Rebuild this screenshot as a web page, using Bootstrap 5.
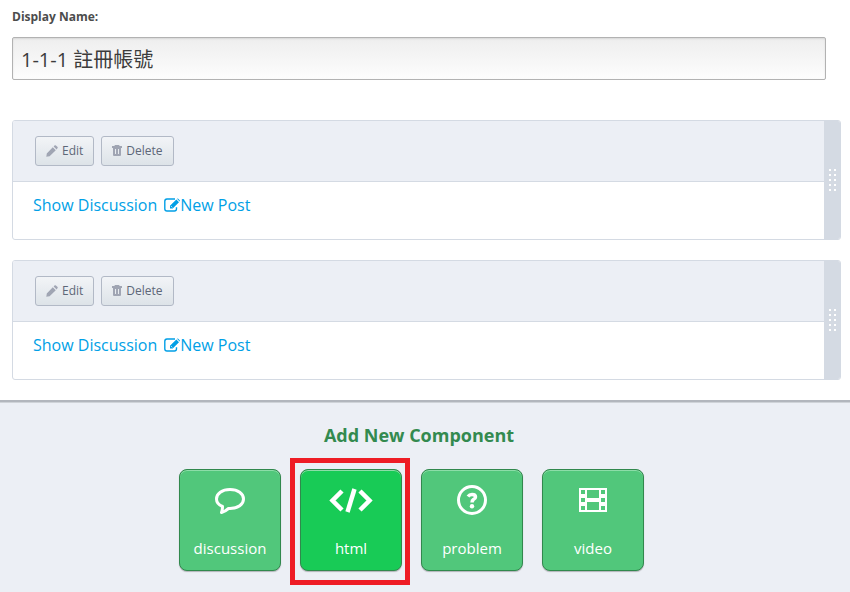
<!DOCTYPE html>
<html lang="zh-Hant">
<head>
<meta charset="utf-8">
<meta name="viewport" content="width=device-width, initial-scale=1">
<title>Unit editor</title>
<link href="https://cdn.jsdelivr.net/npm/bootstrap@5.3.0/dist/css/bootstrap.min.css" rel="stylesheet">
<style>
  body { font-family: "Open Sans", "Noto Sans CJK TC", sans-serif; font-size: 16px; line-height: 24px; color: #4c4c4c; background: #fff; }
  .unit-name { padding: 7px 24px 0 12px; }
  .unit-name label { margin-bottom: 10px; font-size: 12px; line-height: 20px; font-weight: 700; }
  .unit-name input { height: 43px; padding: 0 8px; font-size: 20px; color: #3c3c3c; border: 1px solid #b2b2b2; border-radius: 2px; background: linear-gradient(#eee, #fdfdfd); box-shadow: inset 0 1px 2px rgba(0,0,0,.1); }
  .components { padding: 40px 9px 20px 12px; gap: 20px; }
  .component { height: 120px; border: 1px solid #d4dae3; border-radius: 3px; overflow: hidden; }
  .component-bar { height: 61px; padding-left: 22px; gap: 7px; background: #eceff5; border-bottom: 1px solid #d4dae3; }
  .btn-tool { height: 30px; padding: 0 10px; gap: 4px; font-size: 12px; line-height: 20px; color: #5d6778; border: 1px solid #b2b9c6; border-radius: 3px; background: linear-gradient(#f2f4f7, #dde3e8); }
  .btn-tool:hover { color: #3c4656; border-color: #8891a1; }
  .btn-tool svg { fill: #a0a5b3; }
  .component-links { padding: 11px 20px; gap: 7px; }
  .component-links a { color: #009fe6; text-decoration: none; }
  .drag-handle { width: 16px; background: #d4dae3; }
  .component-links svg { fill: #009fe6; }
  .add-panel { padding: 20px 12px 21px 0; background: #eceff5; border-top: 2px solid #b2b6bd; box-shadow: inset 0 1px 0 #cfd3d8; }
  .add-panel h2 { font-size: 18px; line-height: 26px; font-weight: 700; color: #338a4f; }
  .tile-list { gap: 19px; padding-right: 15px; margin-top: 21px; }
  .btn-tile { width: 102px; height: 102px; padding: 14px 0 10px; font-size: 15px; line-height: 24px; color: #fff; background: #51c77b; border: 1px solid #31884d; border-radius: 8px; box-shadow: inset 0 1px 0 #8cdda8, 0 1px 1px rgba(0,0,0,.25); }
  .btn-tile:hover, .btn-tile.chosen { color: #fff; background: #18cb56; border-color: #31884d; }
  .highlight-box { inset: -11px -8px -14px -10px; border: 5px solid #ee1c25; pointer-events: none; }
</style>
<script src="https://cdn.jsdelivr.net/npm/bootstrap@5.3.0/dist/js/bootstrap.bundle.min.js"></script>
</head>
<body>
<svg class="d-none" aria-hidden="true">
  <symbol id="pencil" viewBox="0 0 12 12"><path d="M0.300 11.700 0.800 8.400 6.800 2.200 9.800 5.200 3.600 11.200ZM7.600 1.400 8.800.300Q9.400 0 9.900.400L11.600 2.100Q12 2.600 11.600 3.100L10.600 4.400Z"/></symbol>
  <symbol id="trash" viewBox="0 0 10 12"><path fill-rule="evenodd" d="M3 0H7L7.700 1H10V3H0V1H2.300ZM1 3H9V10Q9 11 8 11H2Q1 11 1 10ZM3 4V9H4V4ZM6 4V9H7V4Z"/></symbol>
  <symbol id="compose" viewBox="0 0 16 14"><path d="M11 1H3Q.8 1 .8 3.200V10.800Q.8 13 3 13H10.300Q12.500 13 12.500 10.800V9.200" fill="none" stroke="#009fe6" stroke-width="1.400"/><path d="M6 10.500V7.800L12.300 1.500 15 4.200 8.700 10.500ZM13 .8Q13.600.2 14.200.8L15.700 2.300Q16.200 2.900 15.600 3.500Z"/><path d="M7.200 8.300 8.200 9.300" stroke="#fff"/></symbol>
  <symbol id="grip" viewBox="0 0 7 22"><path d="M0 0h2v2H0zM5 0h2v2H5zM0 5h2v2H0zM5 5h2v2H5zM0 10h2v2H0zM5 10h2v2H5zM0 15h2v2H0zM5 15h2v2H5zM0 20h2v2H0zM5 20h2v2H5z" fill="#fff"/></symbol>
</svg>

<main>
  <div class="unit-name">
    <label for="display-name" class="d-block">Display Name:</label>
    <input id="display-name" type="text" class="form-control" value="1-1-1 註冊帳號">
  </div>

  <div class="components d-flex flex-column">
    <section class="component d-flex">
      <div class="flex-grow-1">
        <div class="component-bar d-flex align-items-center">
          <button type="button" class="btn btn-tool d-flex align-items-center"><svg width="12" height="12"><use href="#pencil"/></svg>Edit</button>
          <button type="button" class="btn btn-tool d-flex align-items-center"><svg width="10" height="12"><use href="#trash"/></svg>Delete</button>
        </div>
        <div class="component-links d-flex">
          <a href="#">Show Discussion</a>
          <a href="#" class="d-flex align-items-center"><svg width="16" height="14"><use href="#compose"/></svg>New Post</a>
        </div>
      </div>
      <div class="drag-handle d-flex align-items-center justify-content-center"><svg width="7" height="22"><use href="#grip"/></svg></div>
    </section>

    <section class="component d-flex">
      <div class="flex-grow-1">
        <div class="component-bar d-flex align-items-center">
          <button type="button" class="btn btn-tool d-flex align-items-center"><svg width="12" height="12"><use href="#pencil"/></svg>Edit</button>
          <button type="button" class="btn btn-tool d-flex align-items-center"><svg width="10" height="12"><use href="#trash"/></svg>Delete</button>
        </div>
        <div class="component-links d-flex">
          <a href="#">Show Discussion</a>
          <a href="#" class="d-flex align-items-center"><svg width="16" height="14"><use href="#compose"/></svg>New Post</a>
        </div>
      </div>
      <div class="drag-handle d-flex align-items-center justify-content-center"><svg width="7" height="22"><use href="#grip"/></svg></div>
    </section>
  </div>

  <section class="add-panel text-center">
    <h2 class="mb-0">Add New Component</h2>
    <div class="tile-list d-flex flex-wrap justify-content-center">
      <button type="button" class="btn btn-tile d-flex flex-column align-items-center justify-content-between">
        <svg width="44" height="32" viewBox="0 0 44 32" fill="none" stroke="#fff" stroke-width="3" stroke-linejoin="round"><path d="M22 5.500C30 5.500 35.500 9.500 35.500 15C35.500 20.500 30 24.500 22 24.500H20.500Q17 27.500 13.500 28.500Q14.500 26 14.500 22.500Q8.500 20 8.500 15C8.500 9.500 14 5.500 22 5.500Z"/></svg>
        discussion
      </button>
      <div class="position-relative">
        <button type="button" class="btn btn-tile chosen d-flex flex-column align-items-center justify-content-between">
          <svg width="44" height="32" viewBox="0 0 44 32" fill="none" stroke="#fff"><path d="M13 7 3.500 16.500 13 26M31 7 40.500 16.500 31 26" stroke-width="4.500"/><path d="M25.500 5 18.500 28" stroke-width="4.500"/></svg>
          html
        </button>
        <div class="highlight-box position-absolute"></div>
      </div>
      <button type="button" class="btn btn-tile d-flex flex-column align-items-center justify-content-between">
        <svg width="44" height="32" viewBox="0 0 44 32" fill="none" stroke="#fff"><circle cx="22" cy="16" r="13.500" stroke-width="3"/><path d="M18 12.500Q19.500 10.500 22 10.500Q25.500 10.500 25.500 13Q25.500 14.500 23.500 15.500Q22 16.500 22 18.500" stroke-width="3.500"/><circle cx="22" cy="22.300" r="2.200" fill="#fff" stroke="none"/></svg>
        problem
      </button>
      <button type="button" class="btn btn-tile d-flex flex-column align-items-center justify-content-between">
        <svg width="44" height="32" viewBox="0 0 44 32"><path fill="#fff" fill-rule="evenodd" d="M8 4H36V28H8ZM10 6V10H14V6ZM10 14V18H14V14ZM10 22V26H14V22ZM30 6V10H34V6ZM30 14V18H34V14ZM30 22V26H34V22ZM16 6V14H28V6ZM16 18V26H28V18Z"/></svg>
        video
      </button>
    </div>
  </section>
</main>
</body>
</html>
